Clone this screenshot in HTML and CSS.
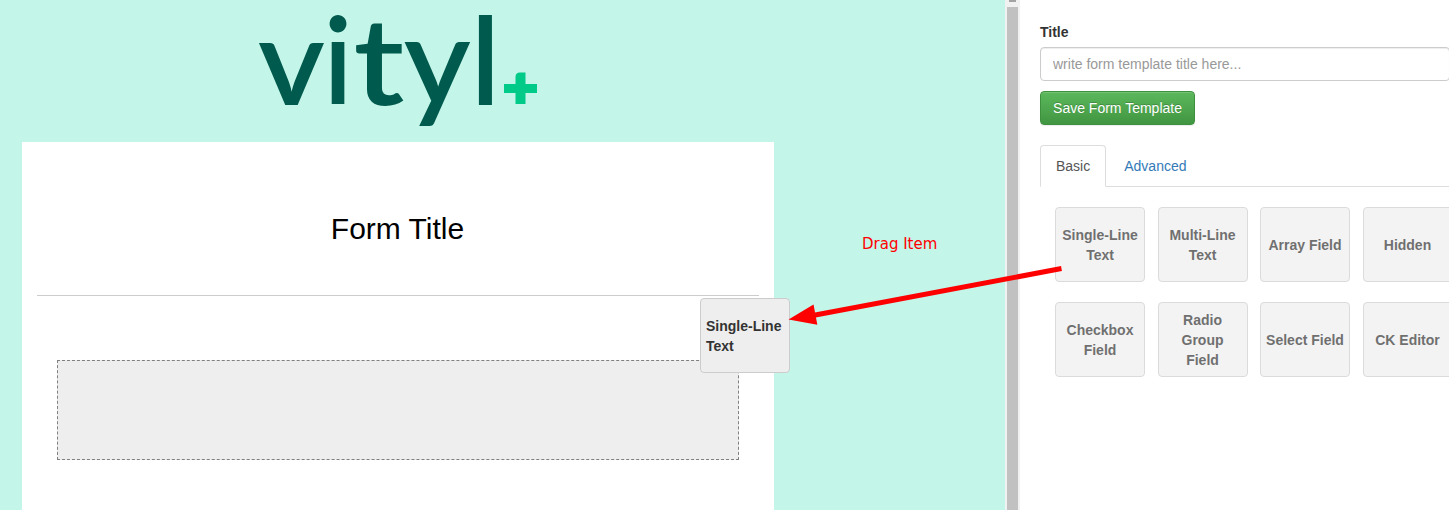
FILE: index.html
```html
<!DOCTYPE html>
<html lang="en">
<head>
<meta charset="utf-8">
<title>Form Builder</title>
<link rel="stylesheet" href="styles.css">
</head>
<body>
<div class="app">
  <main class="canvas">
    <svg class="logo" width="300" height="142" viewBox="248 0 300 142" role="img" aria-label="vityl+">
      <g class="wordmark">
        <text transform="translate(258 104.500) scale(1.060 1)">v</text>
        <text transform="translate(323.600 104.500) scale(.97 1)">i</text>
        <text transform="translate(353.500 104.500) scale(1.150 1)">t</text>
        <text transform="translate(403.800 104.500) scale(1.060 1.020)">y</text>
        <text transform="translate(470.800 104.500) scale(1 1)">l</text>
      </g>
      <path class="plus" d="M504 84H515.500V77Q515.500 72.500 520 72.500H525.500V84H537V93H525.500V104H515.500V93H504Z"/>
    </svg>
    <section class="form-card">
      <h1 class="form-title">Form Title</h1>
      <div class="dropzone"></div>
    </section>
  </main>
  <div class="scrollbar"><div class="scroll-arrow"></div><div class="thumb"></div></div>
  <aside class="sidebar">
    <label class="label" for="title">Title</label>
    <input class="input" id="title" placeholder="write form template title here...">
    <button class="save">Save Form Template</button>
    <nav class="tabs"><a class="tab active">Basic</a><a class="tab">Advanced</a></nav>
    <div class="fields">
      <div class="field">Single-Line Text</div>
      <div class="field">Multi-Line Text</div>
      <div class="field">Array Field</div>
      <div class="field">Hidden</div>
      <div class="field">Checkbox Field</div>
      <div class="field">Radio Group Field</div>
      <div class="field">Select Field</div>
      <div class="field">CK Editor</div>
    </div>
  </aside>
</div>
<div class="dragged">Single-Line Text</div>
<svg class="arrow" width="1449" height="510" viewBox="0 0 1449 510">
  <path class="shaft" d="M1061.500 268.500L814 315.200"/>
  <path class="head" d="M788.500 319.500L813.500 304.500L817.300 324.700Z"/>
</svg>
<div class="note">Drag Item</div>
</body>
</html>
```
FILE: styles.css
```css
* { box-sizing: border-box; }
body {
  margin: 0;
  height: 510px;
  overflow: hidden;
  position: relative;
  font: 14px/20px "Liberation Sans", Arial, sans-serif;
  color: #333;
  background: #fff;
}
.app { display: flex; height: 510px; overflow: hidden; }
.canvas { flex: 0 0 1005px; background: #c3f5e9; padding-left: 22px; }
.logo { display: block; margin-left: 226px; overflow: visible; }
.wordmark { font: 600 121px Lato, sans-serif; fill: #005b4e; }
.plus { fill: #00ca88; }
.form-card { width: 752px; height: 400px; padding: 0 15px; background: #fff; }
.form-title {
  margin: 0 0 64px;
  height: 154px;
  padding: 70px 1px 0 0;
  border-bottom: 1px solid #ccc;
  font-size: 30px;
  line-height: 33px;
  font-weight: normal;
  text-align: center;
  color: #000;
}
.dropzone { height: 100px; margin: 0 20px; background: #eee; border: 1px dashed #808080; }
.scrollbar {
  flex: 0 0 15px;
  display: flex;
  flex-direction: column;
  align-items: center;
  background: #f1f1f1;
}
.scroll-arrow { width: 7px; height: 2px; margin-bottom: 5px; background: #a3a3a3; }
.thumb { width: 11px; flex: 1; background: #c1c1c1; }
.sidebar { flex: 0 0 450px; padding: 22px 20px; }
.label { display: block; margin-bottom: 5px; font-weight: bold; }
.input {
  display: block;
  width: 410px;
  height: 34px;
  padding: 6px 12px;
  border: 1px solid #ccc;
  border-radius: 4px;
  box-shadow: inset 0 1px 1px rgba(0, 0, 0, .075);
  font: inherit;
}
.input::placeholder { color: #999; }
.save {
  display: block;
  width: 155px;
  height: 34px;
  margin: 10px 0 20px;
  padding: 0;
  border: 1px solid #3e8f3e;
  border-radius: 4px;
  background: linear-gradient(#5cb85c, #419641);
  box-shadow: inset 0 1px 0 rgba(255, 255, 255, .15), 0 1px 1px rgba(0, 0, 0, .075);
  color: #fff;
  font: inherit;
  text-shadow: 0 -1px 0 rgba(0, 0, 0, .2);
}
.tabs { display: flex; height: 42px; border-bottom: 1px solid #ddd; }
.tab {
  height: 42px;
  margin-right: 2px;
  padding: 10px 15px;
  border: 1px solid transparent;
  border-radius: 4px 4px 0 0;
  color: #337ab7;
}
.tab.active { border-color: #ddd #ddd #fff; background: #fff; color: #555; }
.fields {
  display: grid;
  grid-template-columns: repeat(4, 90px);
  gap: 20px 12.5px;
  padding: 20px 0 0 15px;
}
.field, .dragged {
  display: flex;
  align-items: center;
  width: 90px;
  height: 75px;
  padding: 5px;
  border: 1px solid #ccc;
  border-radius: 4px;
  background: #eee;
  font-weight: bold;
}
.field { justify-content: center; text-align: center; opacity: .7; }
.dragged { position: absolute; left: 700px; top: 298px; }
.arrow { position: absolute; left: 0; top: 0; }
.shaft { stroke: #f00; stroke-width: 5; fill: none; }
.head { fill: #f00; }
.note {
  position: absolute;
  left: 862px;
  top: 234px;
  font: 15px/20px "DejaVu Sans", sans-serif;
  color: #f00;
}
```
